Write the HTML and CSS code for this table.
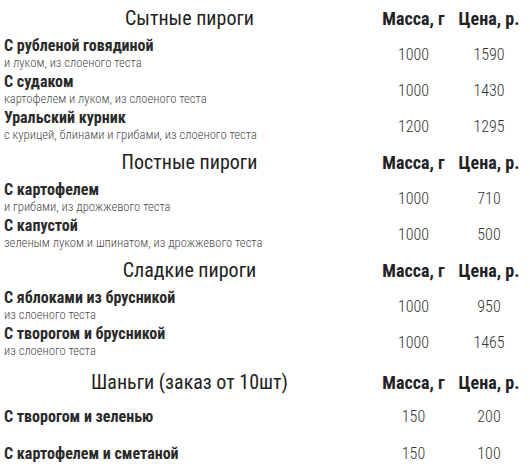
FILE: index.html
```html
<!DOCTYPE html>
<html lang="ru">
<head>
<meta charset="utf-8">
<link rel="stylesheet" href="styles.css">
</head>
<body>
<div class="menu">
  <div class="row head">
    <div class="cat">Сытные пироги</div>
    <div class="col-h">Масса, г</div>
    <div class="col-h">Цена, р.</div>
  </div>
  <div class="row">
    <div class="item"><div class="name">С рубленой говядиной</div><div class="desc">и луком, из слоеного теста</div></div>
    <div class="num">1000</div><div class="num">1590</div>
  </div>
  <div class="row">
    <div class="item"><div class="name">С судаком</div><div class="desc">картофелем и луком, из слоеного теста</div></div>
    <div class="num">1000</div><div class="num">1430</div>
  </div>
  <div class="row">
    <div class="item"><div class="name">Уральский курник</div><div class="desc">с курицей, блинами и грибами, из слоеного теста</div></div>
    <div class="num">1200</div><div class="num">1295</div>
  </div>

  <div class="row head">
    <div class="cat">Постные пироги</div>
    <div class="col-h">Масса, г</div>
    <div class="col-h">Цена, р.</div>
  </div>
  <div class="row">
    <div class="item"><div class="name">С картофелем</div><div class="desc">и грибами, из дрожжевого теста</div></div>
    <div class="num">1000</div><div class="num">710</div>
  </div>
  <div class="row">
    <div class="item"><div class="name">С капустой</div><div class="desc">зеленым луком и шпинатом, из дрожжевого теста</div></div>
    <div class="num">1000</div><div class="num">500</div>
  </div>

  <div class="row head">
    <div class="cat">Сладкие пироги</div>
    <div class="col-h">Масса, г</div>
    <div class="col-h">Цена, р.</div>
  </div>
  <div class="row">
    <div class="item"><div class="name">С яблоками из брусникой</div><div class="desc">из слоеного теста</div></div>
    <div class="num">1000</div><div class="num">950</div>
  </div>
  <div class="row">
    <div class="item"><div class="name">С творогом и брусникой</div><div class="desc">из слоеного теста</div></div>
    <div class="num">1000</div><div class="num">1465</div>
  </div>

  <div class="row head head-last">
    <div class="cat">Шаньги (заказ от 10шт)</div>
    <div class="col-h">Масса, г</div>
    <div class="col-h">Цена, р.</div>
  </div>
  <div class="row row-short">
    <div class="item"><div class="name">С творогом и зеленью</div></div>
    <div class="num">150</div><div class="num">200</div>
  </div>
  <div class="row row-tall">
    <div class="item"><div class="name">С картофелем и сметаной</div></div>
    <div class="num">150</div><div class="num">100</div>
  </div>
</div>
</body>
</html>
```
FILE: styles.css
```css
html, body {
  margin: 0;
  padding: 0;
  background: #fff;
}
body {
  font-family: "Roboto Condensed", Roboto, sans-serif;
  color: #222;
}
.menu {
  display: grid;
  grid-template-columns: 1fr;
  width: 530px;
}
.row {
  display: grid;
  grid-template-columns: 371px 77px 74px;
  align-items: center;
  min-height: 36px;
  padding-left: 4px;
}
.head-last {
  padding-top: 4px;
}
.row-short {
  min-height: 33px;
}
.row-tall {
  min-height: 41px;
}
.cat {
  text-align: center;
  font-size: 20px;
  color: #222;
}
.col-h {
  text-align: center;
  font-size: 18px;
  font-weight: 700;
  color: #222;
}
.name {
  font-size: 16px;
  font-weight: 700;
  line-height: 17px;
  color: #2a2a2a;
}
.desc {
  font-size: 12.6px;
  font-weight: 300;
  line-height: 17px;
  color: #4a4a4a;
}
.num {
  text-align: center;
  font-size: 16px;
  font-weight: 300;
  color: #333;
}
```
